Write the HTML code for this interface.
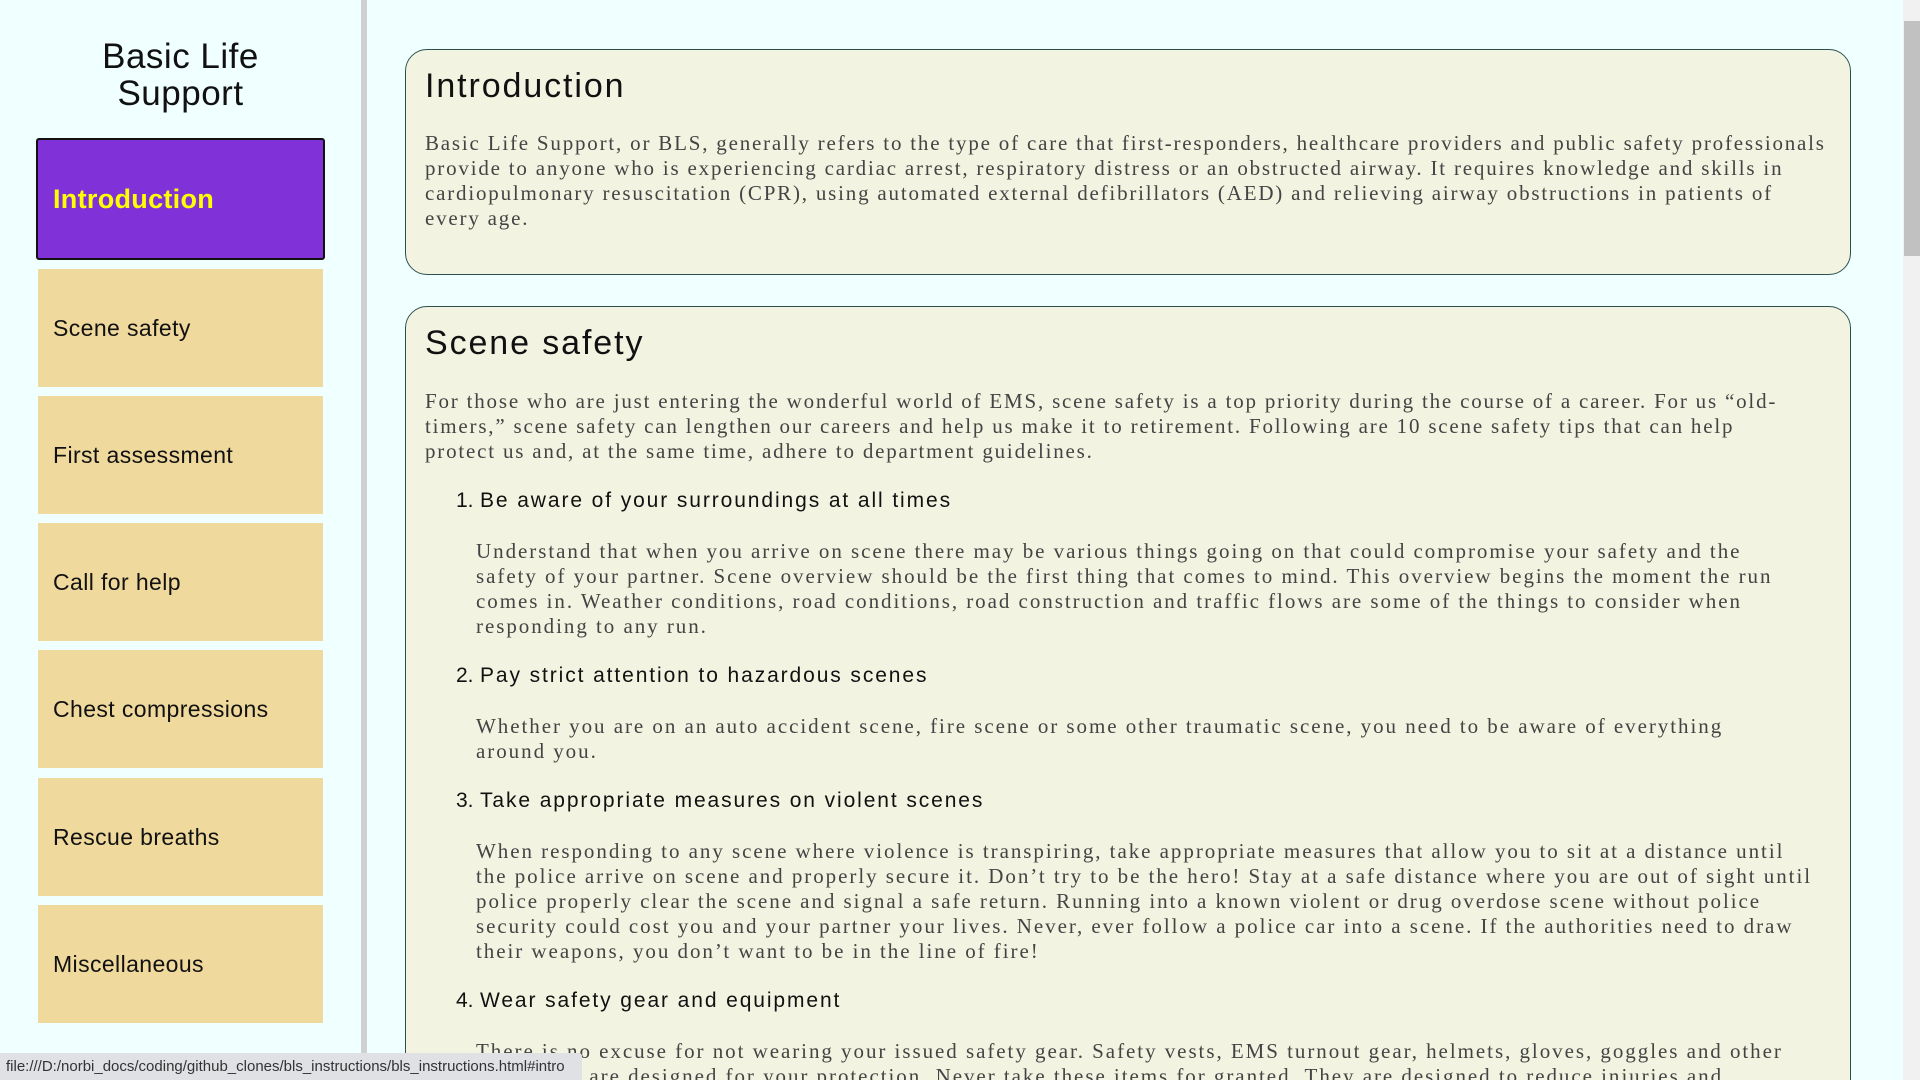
<!DOCTYPE html>
<html><head><meta charset="utf-8"><style>
html,body{margin:0;padding:0;width:1920px;height:1080px;overflow:hidden;background:#f0ffff;}
body{position:relative;font-family:"Liberation Sans",sans-serif;}
.side{position:absolute;left:0;top:0;width:361px;height:1080px;background:#f0ffff;}
.bar{position:absolute;left:361px;top:0;width:6px;height:1080px;background:#d0d0d0;}
.title{position:absolute;left:0;width:361px;top:38px;text-align:center;font-size:35px;line-height:37px;color:#111;letter-spacing:0.5px;}
.nav{position:absolute;left:38px;width:285px;height:118px;background:#efd99c;font-size:23px;letter-spacing:0.4px;color:#111;box-sizing:border-box;padding-left:15px;display:flex;align-items:center;}
.nav.act{left:36px;width:289px;top:138px;height:122px;background:#8032d8;border:2px solid #111;border-radius:3px;color:#ffff00;font-size:27px;padding-left:15px;font-weight:bold;letter-spacing:0.3px;}
.card{position:absolute;left:405px;width:1446px;background:#f2f4e1;border:1.5px solid #2f4f4f;border-radius:22px;box-sizing:border-box;padding:16px 0 0 19px;overflow:hidden;}
h2{margin:0;font-weight:normal;font-size:34px;line-height:40px;color:#111;letter-spacing:1.9px;}
p{margin:0;font-family:"Liberation Serif",serif;font-size:21px;line-height:25px;color:#444;letter-spacing:1.8px;white-space:nowrap;}
.it{margin-left:31px;font-size:21px;line-height:26px;color:#111;letter-spacing:1.9px;}
.it span{display:inline-block;width:24px;letter-spacing:0;}
.ip{margin-left:51px;letter-spacing:1.95px;}
.scroll{position:absolute;right:0;top:0;width:17px;height:1080px;background:#f1f1f1;}
.thumb{position:absolute;left:1px;top:21px;width:16px;height:235px;background:#c1c1c1;}
.status{position:absolute;left:0;top:1053px;height:27px;width:582px;background:#dfe1e5;border-top-right-radius:3px;font-size:15px;color:#333;line-height:27px;padding-left:6px;box-sizing:border-box;white-space:nowrap;overflow:hidden;}
</style></head><body>
<div class="side">
<div class="title">Basic Life<br>Support</div>
<div class="nav act">Introduction</div>
<div class="nav" style="top:269px">Scene safety</div>
<div class="nav" style="top:396px">First assessment</div>
<div class="nav" style="top:523px">Call for help</div>
<div class="nav" style="top:650px">Chest compressions</div>
<div class="nav" style="top:778px">Rescue breaths</div>
<div class="nav" style="top:905px">Miscellaneous</div>
</div>
<div class="bar"></div>
<div class="card" style="top:49px;height:226px;">
<h2>Introduction</h2>
<p style="margin-top:25px">Basic Life Support, or BLS, generally refers to the type of care that first-responders, healthcare providers and public safety professionals<br>provide to anyone who is experiencing cardiac arrest, respiratory distress or an obstructed airway. It requires knowledge and skills in<br>cardiopulmonary resuscitation (CPR), using automated external defibrillators (AED) and relieving airway obstructions in patients of<br>every age.</p>
</div>
<div class="card" style="top:306px;height:800px;">
<h2>Scene safety</h2>
<p style="margin-top:26px">For those who are just entering the wonderful world of EMS, scene safety is a top priority during the course of a career. For us “old-<br>timers,” scene safety can lengthen our careers and help us make it to retirement. Following are 10 scene safety tips that can help<br>protect us and, at the same time, adhere to department guidelines.</p>
<div class="it" style="margin-top:24px"><span>1.</span>Be aware of your surroundings at all times</div>
<p class="ip" style="margin-top:25px">Understand that when you arrive on scene there may be various things going on that could compromise your safety and the<br>safety of your partner. Scene overview should be the first thing that comes to mind. This overview begins the moment the run<br>comes in. Weather conditions, road conditions, road construction and traffic flows are some of the things to consider when<br>responding to any run.</p>
<div class="it" style="margin-top:24px"><span>2.</span>Pay strict attention to hazardous scenes</div>
<p class="ip" style="margin-top:25px">Whether you are on an auto accident scene, fire scene or some other traumatic scene, you need to be aware of everything<br>around you.</p>
<div class="it" style="margin-top:24px"><span>3.</span>Take appropriate measures on violent scenes</div>
<p class="ip" style="margin-top:25px">When responding to any scene where violence is transpiring, take appropriate measures that allow you to sit at a distance until<br>the police arrive on scene and properly secure it. Don’t try to be the hero! Stay at a safe distance where you are out of sight until<br>police properly clear the scene and signal a safe return. Running into a known violent or drug overdose scene without police<br>security could cost you and your partner your lives. Never, ever follow a police car into a scene. If the authorities need to draw<br>their weapons, you don’t want to be in the line of fire!</p>
<div class="it" style="margin-top:24px"><span>4.</span>Wear safety gear and equipment</div>
<p class="ip" style="margin-top:25px">There is no excuse for not wearing your issued safety gear. Safety vests, EMS turnout gear, helmets, gloves, goggles and other<br>equipment are designed for your protection. Never take these items for granted. They are designed to reduce injuries and</p>
</div>
<div class="scroll"><div class="thumb"></div></div>
<div class="status">file:///D:/norbi_docs/coding/github_clones/bls_instructions/bls_instructions.html#intro</div>
</body></html>
